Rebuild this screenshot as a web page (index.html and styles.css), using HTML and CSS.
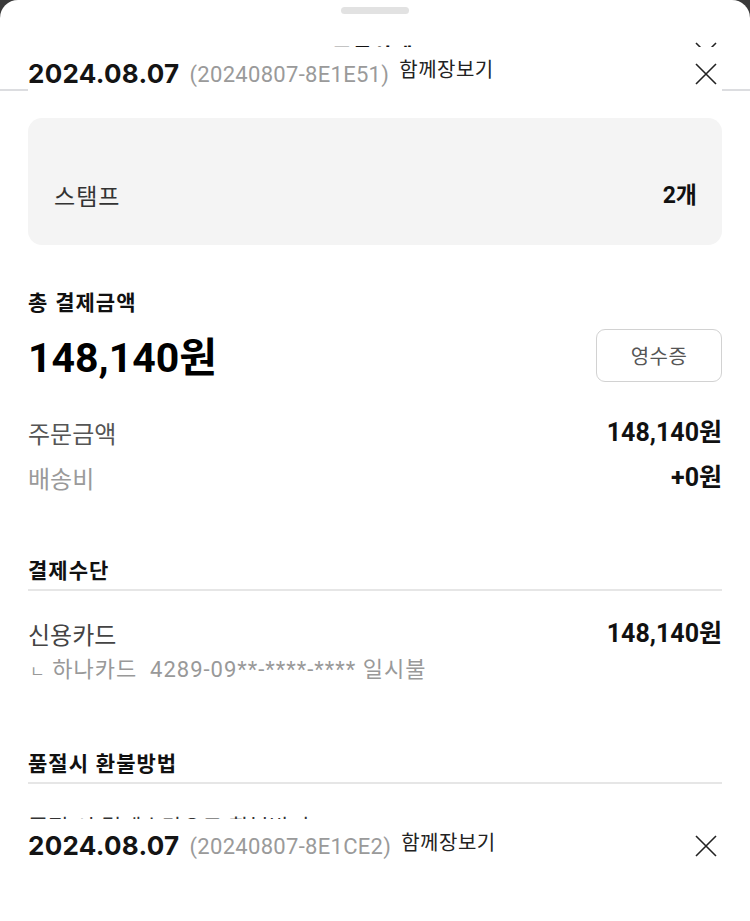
FILE: index.html
```html
<!DOCTYPE html>
<html lang="ko">
<head>
<meta charset="utf-8">
<title>주문상세</title>
<link rel="stylesheet" href="styles.css">
</head>
<body>
<div class="sheet">
  <div class="handle"></div>
  <header class="title-bar">
    <h1 class="title">주문상세</h1>
    <button class="close close-title" aria-label="닫기">
      <svg width="22" height="22" viewBox="0 0 22 22"><path d="M1 1L21 21M21 1L1 21" stroke="#222" stroke-width="1.6" fill="none"/></svg>
    </button>
  </header>

  <main class="content">
    <section class="stamp-card">
      <span class="stamp-label">스탬프</span>
      <span class="stamp-value">2개</span>
    </section>

    <section class="block">
      <h2 class="section-title">총 결제금액</h2>
      <div class="total-row">
        <strong class="total-amount">148,140원</strong>
        <button class="receipt">영수증</button>
      </div>
      <div class="line-row line-first">
        <span class="label">주문금액</span>
        <span class="value">148,140원</span>
      </div>
      <div class="line-row line-next">
        <span class="label label-muted">배송비</span>
        <span class="value">+0원</span>
      </div>
    </section>

    <section class="block block-method">
      <h2 class="section-title section-title-ruled">결제수단</h2>
      <div class="line-row line-method">
        <span class="label label-dark">신용카드</span>
        <span class="value">148,140원</span>
      </div>
      <p class="card-sub"><span class="card-sub-mark">ㄴ</span> 하나카드&nbsp; 4289-09**-****-**** 일시불</p>
    </section>

    <section class="block block-refund">
      <h2 class="section-title section-title-ruled">품절시 환불방법</h2>
      <p class="refund-text">품절 시 결제수단으로 환불받기</p>
    </section>
  </main>

  <div class="order-bar order-bar-top">
    <span class="order-date">2024.08.07</span>
    <span class="order-code">(20240807-8E1E51)</span>
    <span class="order-type">함께장보기</span>
    <button class="close close-bar" aria-label="닫기">
      <svg width="22" height="22" viewBox="0 0 22 22"><path d="M1 1L21 21M21 1L1 21" stroke="#222" stroke-width="1.6" fill="none"/></svg>
    </button>
  </div>

  <div class="order-bar order-bar-bottom">
    <span class="order-date">2024.08.07</span>
    <span class="order-code">(20240807-8E1CE2)</span>
    <span class="order-type">함께장보기</span>
    <button class="close close-bar" aria-label="닫기">
      <svg width="22" height="22" viewBox="0 0 22 22"><path d="M1 1L21 21M21 1L1 21" stroke="#222" stroke-width="1.6" fill="none"/></svg>
    </button>
  </div>
</div>
</body>
</html>
```

FILE: styles.css
```css
* { box-sizing: border-box; }

html, body {
  margin: 0;
  padding: 0;
  background: #3a3a3a;
}

body {
  font-family: Roboto, "Noto Sans CJK KR", sans-serif;
  color: #111;
}

.sheet {
  position: relative;
  background: #fff;
  border-radius: 18px 18px 0 0;
  min-height: 921px;
  overflow: hidden;
}

.handle {
  width: 68px;
  height: 7px;
  margin: 7px auto 0;
  border-radius: 4px;
  background: #e2e2e2;
}

.title-bar {
  margin-top: 10px;
  height: 67px;
  padding: 16px 32px 0 28px;
  border-bottom: 2px solid #dcdde0;
  display: flex;
  justify-content: center;
  align-items: flex-start;
  position: relative;
}

.title {
  margin: 0;
  font-family: "Noto Sans CJK KR", sans-serif;
  font-size: 21px;
  line-height: 28px;
  font-weight: 700;
  color: #111;
  letter-spacing: 1px;
}

.close {
  border: 0;
  padding: 0;
  background: transparent;
  display: flex;
}

.close-title {
  position: absolute;
  right: 33px;
  top: 18px;
}

.content {
  padding: 27px 28px 60px;
}

.stamp-card {
  height: 127px;
  border-radius: 14px;
  background: #f4f4f4;
  display: flex;
  justify-content: space-between;
  align-items: flex-end;
  padding: 0 25px 34px 26px;
}

.stamp-label {
  font-family: "Noto Sans CJK KR", sans-serif;
  font-size: 23px;
  line-height: 31px;
  color: #333;
  letter-spacing: 1px;
}

.stamp-value {
  font-family: Roboto, "Noto Sans CJK KR", sans-serif;
  font-size: 23px;
  line-height: 31px;
  font-weight: 700;
  color: #111;
}

.block { margin-top: 42px; }
.block-method { margin-top: 62px; }
.block-refund { margin-top: 65px; }

.section-title {
  margin: 0;
  font-family: "Noto Sans CJK KR", sans-serif;
  font-size: 21px;
  line-height: 28px;
  font-weight: 700;
  color: #111;
  letter-spacing: 1px;
}

.section-title-ruled {
  padding-bottom: 6px;
  border-bottom: 2px solid #e6e6e6;
}

.total-row {
  margin-top: 14px;
  height: 53px;
  display: flex;
  justify-content: space-between;
  align-items: center;
}

.total-amount {
  font-family: Roboto, "Noto Sans CJK KR", sans-serif;
  font-size: 41px;
  line-height: 48px;
  font-weight: 700;
  color: #000;
  padding-top: 5px;
}

.receipt {
  width: 126px;
  height: 53px;
  border: 1.5px solid #d2d2d2;
  border-radius: 9px;
  background: #fff;
  font-family: "Noto Sans CJK KR", sans-serif;
  font-size: 20px;
  letter-spacing: 0.5px;
  color: #555;
  padding: 0;
}

.line-row {
  display: flex;
  justify-content: space-between;
  align-items: center;
  height: 30px;
}

.line-first { margin-top: 36px; }
.line-next { margin-top: 15px; }
.line-method { margin-top: 28px; }

.label {
  font-family: "Noto Sans CJK KR", sans-serif;
  font-size: 24px;
  line-height: 30px;
  color: #555;
}

.label-muted { color: #9a9a9a; }
.label-dark { color: #444; }

.value {
  font-family: Roboto, "Noto Sans CJK KR", sans-serif;
  font-size: 25px;
  line-height: 30px;
  font-weight: 700;
  color: #111;
}

.card-sub {
  margin: 8px 0 0;
  height: 26px;
  font-family: Roboto, "Noto Sans CJK KR", sans-serif;
  font-size: 22px;
  line-height: 26px;
  letter-spacing: 1px;
  color: #999;
}

.card-sub-mark {
  font-size: 16px;
  line-height: 1;
  margin-left: 2px;
}

.refund-text {
  margin: 26px 0 0;
  font-family: "Noto Sans CJK KR", sans-serif;
  font-size: 22px;
  line-height: 30px;
  color: #333;
}

.order-bar {
  position: absolute;
  left: 28px;
  right: 28px;
  background: #fff;
  display: flex;
  align-items: center;
}

.order-bar-top {
  top: 47px;
  height: 45px;
  padding-top: 9px;
}

.order-bar-bottom {
  top: 819px;
  height: 54px;
}

.order-date {
  font-family: Inter, Roboto, sans-serif;
  font-size: 26px;
  font-weight: 700;
  line-height: 32px;
  color: #141414;
  letter-spacing: 0.3px;
}

.order-code {
  margin-left: 10px;
  font-family: Roboto, sans-serif;
  font-size: 22px;
  line-height: 28px;
  letter-spacing: 0.3px;
  color: #9a9a9a;
  padding-top: 2px;
}

.order-type {
  margin-left: 10px;
  align-self: flex-start;
  font-family: "Noto Sans CJK KR", sans-serif;
  font-size: 20px;
  line-height: 26px;
  letter-spacing: 0.5px;
  color: #222;
  margin-top: 0;
}

.order-bar-bottom .order-type { margin-top: 10px; }

.close-bar {
  margin-left: auto;
  margin-right: 5px;
}
```
